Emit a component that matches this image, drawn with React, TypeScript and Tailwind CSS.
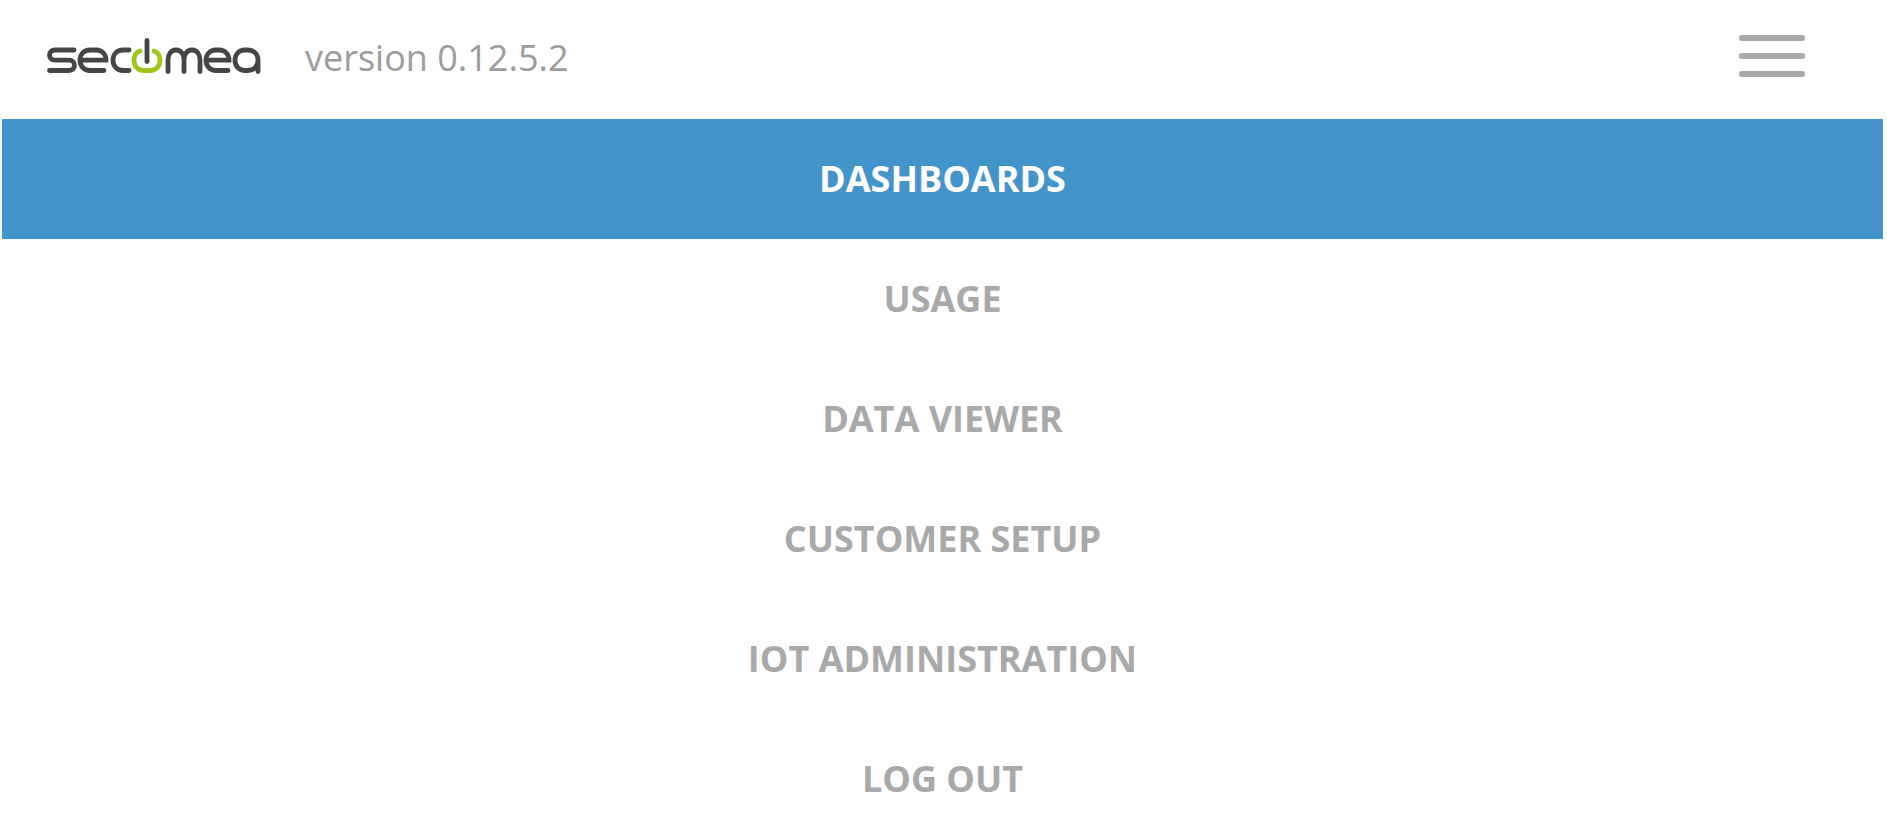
const items = ["USAGE", "DATA VIEWER", "CUSTOMER SETUP", "IOT ADMINISTRATION", "LOG OUT"];

function Logo() {
  const dark = "#454545";
  return (
    <svg width="222" height="50" viewBox="44 34.5 222 50" fill="none" strokeLinecap="round" className="block">
      <g stroke={dark} strokeWidth="4.8">
        {/* s */}
        <path d="M74 49.500H55c-3.500 0-5.500 2.200-5.500 5.100s2 5.100 5.500 5.100h14c3.500 0 5.500 2.200 5.500 5.150S72.500 70 69 70H49.500" />
        {/* e */}
        <path d="M80 59.700h26c0-6-4-10.200-10-10.200h-6c-6 0-10 4.200-10 10.200S84 70 90 70h14" />
        {/* c */}
        <path d="M129 49.500h-6c-6 0-10 4.200-10 10.200S117 70 123 70h6" />
        {/* m */}
        <path d="M168 71V59.700c0-6 3-10.200 8-10.200s8 4.200 8 10.200V71M184 59.700c0-6 3-10.200 8-10.200s8 4.200 8 10.200V71" />
        {/* e */}
        <path d="M206 59.700h23c0-6-4-10.200-10-10.200h-3c-6 0-10 4.200-10 10.200S210 70 216 70h12" />
        {/* a */}
        <path d="M258 59.700c0-6-4-10.200-10-10.200h-3c-6 0-10 4.200-10 10.200S239 70 245 70h3c6 0 10-4.300 10-10.300V71" />
      </g>
      {/* power symbol */}
      <path d="M140 50.500c-4 1.500-6 4.700-6 9.200 0 6 4 10.300 10 10.300h6c6 0 10-4.300 10-10.300 0-4.500-2-7.700-6-9.200" stroke="#a2c617" strokeWidth="4.800" />
      <path d="M147 40v21" stroke={dark} strokeWidth="4.800" />
    </svg>
  );
}

export default function App() {
  return (
    <div className="min-h-screen bg-white font-['Open_Sans',sans-serif]">
      <header className="h-[119px] flex items-center justify-between pl-[44px] pr-[82px]">
        <div className="flex items-center gap-[39px]">
          <Logo />
          <span className="text-[36px] text-[#9c9c9c] leading-none mb-[4px]">version 0.12.5.2</span>
        </div>
        <div className="flex flex-col gap-[12px] w-[66px] mb-[8px]">
          <div className="h-[6px] rounded-full bg-[#a9a9a9]" />
          <div className="h-[6px] rounded-full bg-[#a9a9a9]" />
          <div className="h-[6px] rounded-full bg-[#a9a9a9]" />
        </div>
      </header>
      <nav className="ml-[2px] mr-[4px] flex flex-col">
        <a className="h-[120px] flex items-center justify-center bg-[#4294cb] text-white text-[36px] font-bold">DASHBOARDS</a>
        {items.map((item) => (
          <a key={item} className="h-[120px] shrink-0 flex items-center justify-center text-[#a9a9a9] text-[36px] font-bold">
            {item}
          </a>
        ))}
      </nav>
    </div>
  );
}
